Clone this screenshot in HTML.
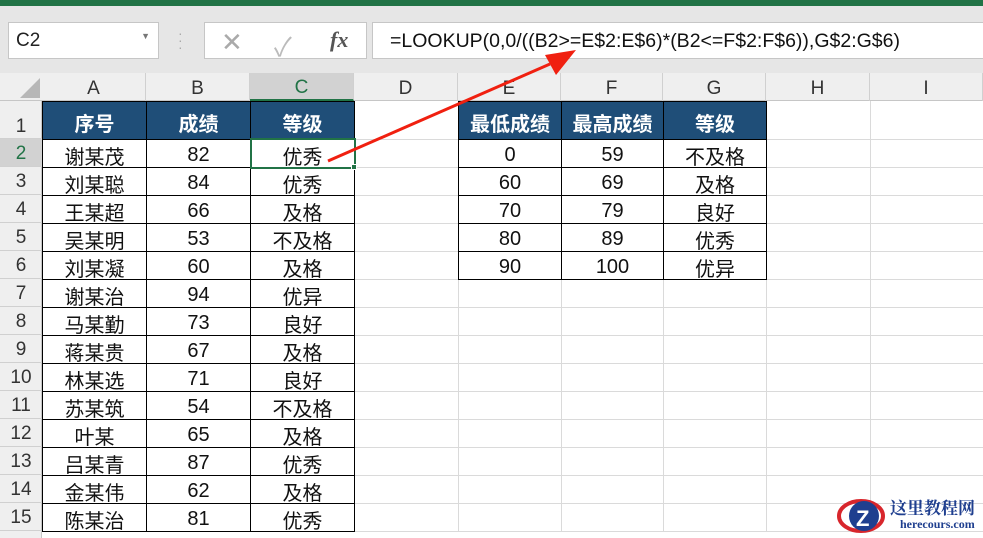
<!DOCTYPE html><html><head><meta charset="utf-8"><style>
body{margin:0;width:983px;height:538px;overflow:hidden;background:#fff;font-family:"Liberation Sans","Noto Sans CJK SC",sans-serif;position:relative}
.a{position:absolute;box-sizing:border-box}
.c{position:absolute;box-sizing:border-box;display:flex;align-items:center;justify-content:center;font-size:20px;color:#111;padding-top:3px}
.h{background:#1f4e78;color:#fff;font-weight:bold}
</style></head><body>
<div class="a" style="left:0;top:0;width:983px;height:6px;background:#217346"></div>
<div class="a" style="left:0;top:6px;width:983px;height:67px;background:#e6e6e6"></div>
<div class="a" style="left:8px;top:22px;width:151px;height:37px;background:#fff;border:1px solid #c6c6c6;font-size:19px;padding:7px 0 0 7px;color:#222">C2<span style="position:absolute;right:8px;top:8px;font-size:9px;color:#777">▼</span></div>
<div class="a" style="left:178px;top:30px;color:#aaa;font-size:14px;line-height:7px">·<br>·<br>·</div>
<div class="a" style="left:204px;top:22px;width:163px;height:37px;background:#fff;border:1px solid #c6c6c6"></div>
<div class="a" style="left:221px;top:27px;font-size:26px;color:#aaa">✕</div>
<div class="a" style="left:274px;top:27px;font-size:26px;color:#bbb">✓</div>
<div class="a" style="left:330px;top:27px;font-size:22px;color:#555;font-style:italic;font-family:'Liberation Serif',serif;font-weight:bold">fx</div>
<div class="a" style="left:372px;top:22px;width:620px;height:37px;background:#fff;border:1px solid #c6c6c6;font-size:19.5px;padding:7px 0 0 17px;color:#111">=LOOKUP(0,0/((B2&gt;=E$2:E$6)*(B2&lt;=F$2:F$6)),G$2:G$6)</div>
<div class="a" style="left:0;top:73px;width:983px;height:28px;background:#efefef;border-bottom:1px solid #c6c6c6"></div>
<svg class="a" style="left:18px;top:78px" width="22" height="20"><polygon points="22,0 22,20 2,20" fill="#b7b7b7"/></svg>
<div class="a" style="left:0;top:101px;width:42px;height:437px;background:#efefef;border-right:1px solid #c6c6c6"></div>
<div id="g"></div>
<svg class="a" style="left:0;top:0" width="983" height="538">
<line x1="328" y1="161" x2="550" y2="64" stroke="#f02010" stroke-width="3"/>
<polygon points="576,50 545,55 556,75" fill="#f02010"/>
</svg>
<svg class="a" style="left:836px;top:494px" width="50" height="42"><ellipse cx="25" cy="22" rx="22" ry="15" fill="none" stroke="#d8262c" stroke-width="4"/><circle cx="28" cy="22" r="15" fill="#1f3f8f"/><text x="20" y="32" font-size="22" font-weight="bold" fill="#fff" font-family="Liberation Sans">Z</text></svg>
<div class="a" style="left:890px;top:494px;font-size:17px;font-weight:bold;color:#1f3f8f;font-family:'Noto Serif CJK SC',serif">这里教程网</div>
<div class="a" style="left:900px;top:517px;font-size:12px;font-weight:bold;color:#1f3f8f;font-family:'Liberation Serif',serif">herecours.com</div>
<script>
var cols=[0,42,146,250,354,458,561,663,766,870,983],L="ABCDEFGHI";
var rows=[101,139];for(var i=0;i<14;i++)rows.push(167+i*28);
var h='';
for(var i=0;i<9;i++){var sel=i==2;h+='<div class="c" style="left:'+cols[i+1]+'px;top:73px;width:'+(cols[i+2]-cols[i+1])+'px;height:28px;border-right:1px solid #d0d0d0;'+(sel?'background:#d2d2d2;color:#217346;border-bottom:2px solid #217346;':'color:#333;')+'font-size:19px">'+L[i]+'</div>';}
for(var r=0;r<15;r++){var y=rows[r],hh=(r==0?38:28);h+='<div class="c" style="left:0;top:'+y+'px;width:42px;height:'+hh+'px;border-bottom:1px solid #d0d0d0;font-size:19px;'+(r==0?'align-items:flex-end;':'')+(r==1?'background:#d2d2d2;color:#217346;':'color:#333;')+'">'+(r+1)+'</div>';
for(var i=1;i<10;i++)h+='<div class="a" style="left:'+cols[i]+'px;top:'+y+'px;width:'+(cols[i+1]-cols[i]+1)+'px;height:'+(hh+1)+'px;border:1px solid #dadada;border-width:0 1px 1px 0"></div>';}
var A=[["序号","成绩","等级"],["谢某茂",82,"优秀"],["刘某聪",84,"优秀"],["王某超",66,"及格"],["吴某明",53,"不及格"],["刘某凝",60,"及格"],["谢某治",94,"优异"],["马某勤",73,"良好"],["蒋某贵",67,"及格"],["林某选",71,"良好"],["苏某筑",54,"不及格"],["叶某",65,"及格"],["吕某青",87,"优秀"],["金某伟",62,"及格"],["陈某治",81,"优秀"]];
var E=[["最低成绩","最高成绩","等级"],[0,59,"不及格"],[60,69,"及格"],[70,79,"良好"],[80,89,"优秀"],[90,100,"优异"]];
function put(T,c0){for(var r=0;r<T.length;r++)for(var j=0;j<3;j++){var y=rows[r],hh=(r==0?38:28),x=cols[c0+j],w=cols[c0+j+1]-x;
h+='<div class="c'+(r==0?' h':'')+'" style="left:'+x+'px;top:'+y+'px;width:'+(w+1)+'px;height:'+(hh+1)+'px;border:1px solid #000;'+(r==0?'border-color:#000;':'background:#fff;')+'">'+T[r][j]+'</div>';}}
put(A,1);put(E,5);
h+='<div class="a" style="left:250px;top:138px;width:106px;height:31px;border:2px solid #217346"></div><div class="a" style="left:351px;top:164px;width:6px;height:6px;background:#217346;border:1px solid #fff"></div>';
document.getElementById('g').innerHTML=h;
</script>
</body></html>
